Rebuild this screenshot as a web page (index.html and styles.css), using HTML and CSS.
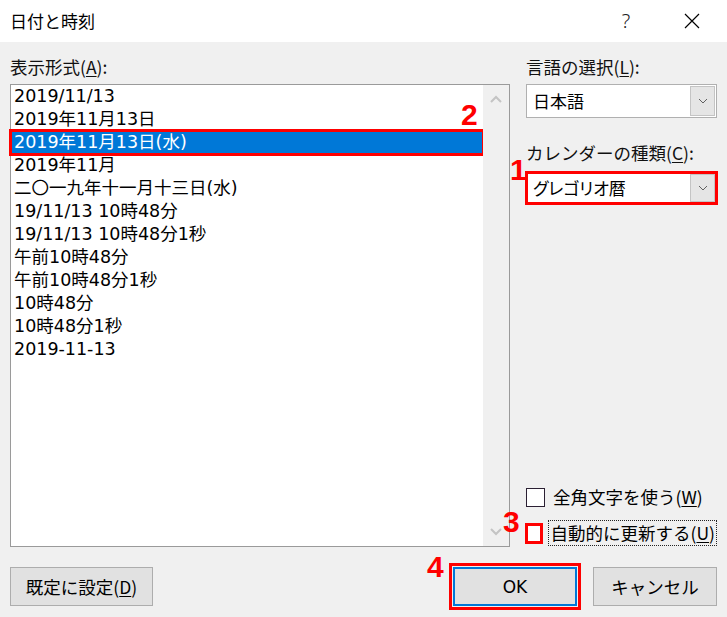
FILE: index.html
```html
<!DOCTYPE html>
<html>
<head>
<meta charset="utf-8">
<title>日付と時刻</title>
<link rel="stylesheet" href="styles.css">
</head>
<body>
<div class="dialog">
	<div class="titlebar">
		<span class="title">日付と時刻</span>
		<span class="help">?</span>
		<span class="close"><svg width="16" height="16" viewBox="0 0 16 16"><path d="M1 1L15 15M15 1L1 15" stroke="#000" stroke-width="1.2" fill="none"/></svg></span>
	</div>
	<div class="main">
		<div class="left">
			<div class="label">表示形式(<u>A</u>):</div>
			<div class="listbox">
				<ul class="items">
					<li>2019/11/13</li>
					<li>2019年11月13日</li>
					<li class="selected">2019年11月13日(水)</li>
					<li>2019年11月</li>
					<li>二〇一九年十一月十三日(水)</li>
					<li>19/11/13 10時48分</li>
					<li>19/11/13 10時48分1秒</li>
					<li>午前10時48分</li>
					<li>午前10時48分1秒</li>
					<li>10時48分</li>
					<li>10時48分1秒</li>
					<li>2019-11-13</li>
				</ul>
				<div class="scrollbar">
					<svg width="12" height="8" viewBox="0 0 12 8"><path d="M1 7L6 2L11 7" stroke="#c4c4c4" stroke-width="2" fill="none"/></svg>
					<svg width="12" height="8" viewBox="0 0 12 8"><path d="M1 1L6 6L11 1" stroke="#c4c4c4" stroke-width="2" fill="none"/></svg>
				</div>
			</div>
		</div>
		<div class="right">
			<div class="label">言語の選択(<u>L</u>):</div>
			<div class="combo">
				<span class="value">日本語</span>
				<span class="drop"><svg width="10" height="6" viewBox="0 0 10 6"><path d="M1 1L5 5L9 1" stroke="#606060" stroke-width="1" fill="none"/></svg></span>
			</div>
			<div class="label second">カレンダーの種類(<u>C</u>):</div>
			<div class="combo marked">
				<span class="value">グレゴリオ暦</span>
				<span class="drop"><svg width="10" height="6" viewBox="0 0 10 6"><path d="M1 1L5 5L9 1" stroke="#606060" stroke-width="1" fill="none"/></svg></span>
			</div>
			<div class="checks">
				<div class="check"><span class="box"></span><span class="text">全角文字を使う(<u>W</u>)</span></div>
				<div class="check"><span class="box marked"></span><span class="text focus">自動的に更新する(<u>U</u>)</span></div>
			</div>
		</div>
	</div>
	<div class="footer">
		<button class="btn wide">既定に設定(<u>D</u>)</button>
		<div class="actions">
			<button class="btn default">OK</button>
			<button class="btn">キャンセル</button>
		</div>
	</div>
	<span class="num n1">1</span>
	<span class="num n2">2</span>
	<span class="num n3">3</span>
	<span class="num n4">4</span>
</div>
</body>
</html>
```
FILE: styles.css
```css
html, body { margin: 0; padding: 0; background: #f0f0f0; }
body { font: normal 17px/1.4 "DejaVu Sans", "Noto Sans CJK JP", sans-serif; color: #000; }
u { text-decoration: underline; text-underline-offset: 2px; }

.dialog { position: relative; width: 727px; height: 617px; display: flex; flex-direction: column; background: #f0f0f0; overflow: hidden; }

/* TITLE */
.titlebar { height: 42px; flex: none; display: flex; align-items: center; background: #fff; padding-left: 10px; font-family: "Noto Sans CJK JP", sans-serif; font-size: 17px; }
.title { flex: 1; }
.help { width: 20px; margin-right: 48px; text-align: center; font-family: "Noto Sans", sans-serif; font-size: 20px; font-weight: 300; color: #222; }
.close { width: 16px; height: 16px; margin-right: 27px; display: flex; }

/* MAIN */
.main { flex: 1; display: flex; gap: 16px; padding: 0 10px; }
.left { width: 500px; display: flex; flex-direction: column; }
.right { width: 191px; display: flex; flex-direction: column; padding-bottom: 1px; }
.label { height: 24px; line-height: 24px; padding-top: 13px; margin-bottom: 5px; font-family: "Noto Sans CJK JP", sans-serif; font-size: 17.5px; color: #111; }
.label.second { padding-top: 23px; margin-bottom: 6px; }

.listbox { flex: 1; display: flex; border: 1px solid #9a9a9a; background: #fff; }
.items { flex: 1; margin: 0; padding: 0; list-style: none; }
.items li { height: 23px; line-height: 23px; padding-left: 3px; font-size: 17.5px; white-space: nowrap; }
.items li.selected { background: #0078d7; color: #fff; outline: 3px solid #f00; outline-offset: -1px; }
.scrollbar { width: 26px; display: flex; flex-direction: column; justify-content: space-between; align-items: center; padding: 10px 0; background: #f0f0f0; }

.combo { height: 34px; box-sizing: border-box; display: flex; align-items: center; border: 1px solid #b0b0b0; background: #fff; padding: 1px; }
.combo.marked { height: 34px; margin: 0 -1px; border: 3px solid #f00; padding: 0; }
.combo .value { flex: 1; padding-left: 5px; font-family: "Noto Sans CJK JP", sans-serif; font-size: 17px; font-feature-settings: "palt"; }
.combo .drop { width: 25px; height: 100%; box-sizing: border-box; display: flex; align-items: center; justify-content: center; border: 1px solid #c4c4c4; background: #e5e5e5; }

.checks { margin-top: auto; display: flex; flex-direction: column; gap: 10px; }
.check { height: 26px; display: flex; align-items: center; gap: 5px; }
.check .box { width: 19px; height: 19px; box-sizing: border-box; border: 1px solid #2b2033; background: #fff; }
.check .box.marked { border: 3px solid #f00; margin-left: -1px; width: 21px; height: 21px; }
.check .text { padding: 0 1px 0 2px; border: 1px dotted transparent; line-height: 24px; font-family: "Noto Sans CJK JP", sans-serif; font-size: 17.5px; white-space: nowrap; }
.check .text.focus { border-color: #222; }

/* FOOTER */
.footer { height: 70px; flex: none; display: flex; justify-content: space-between; align-items: flex-start; padding: 20px 10px 0; box-sizing: border-box; }
.actions { display: flex; gap: 16px; }
.btn { height: 39px; width: 124px; box-sizing: border-box; border: 1px solid #adadad; background: #e1e1e1; font-family: "Noto Sans CJK JP", sans-serif; font-size: 17.5px; color: #000; padding: 0; }
.btn.wide { width: 143px; }
.btn.default { border: 2px solid #0078d7; outline: 3px solid #f00; outline-offset: 1px; font-family: "DejaVu Sans", sans-serif; font-size: 17px; }

/* ANNOTATIONS */
.num { position: absolute; font: bold 30px/1 "Liberation Sans", sans-serif; color: #f00; }
.n1 { left: 510px; top: 155px; }
.n2 { left: 461px; top: 100px; }
.n3 { left: 503px; top: 507px; }
.n4 { left: 427px; top: 552px; }
```
